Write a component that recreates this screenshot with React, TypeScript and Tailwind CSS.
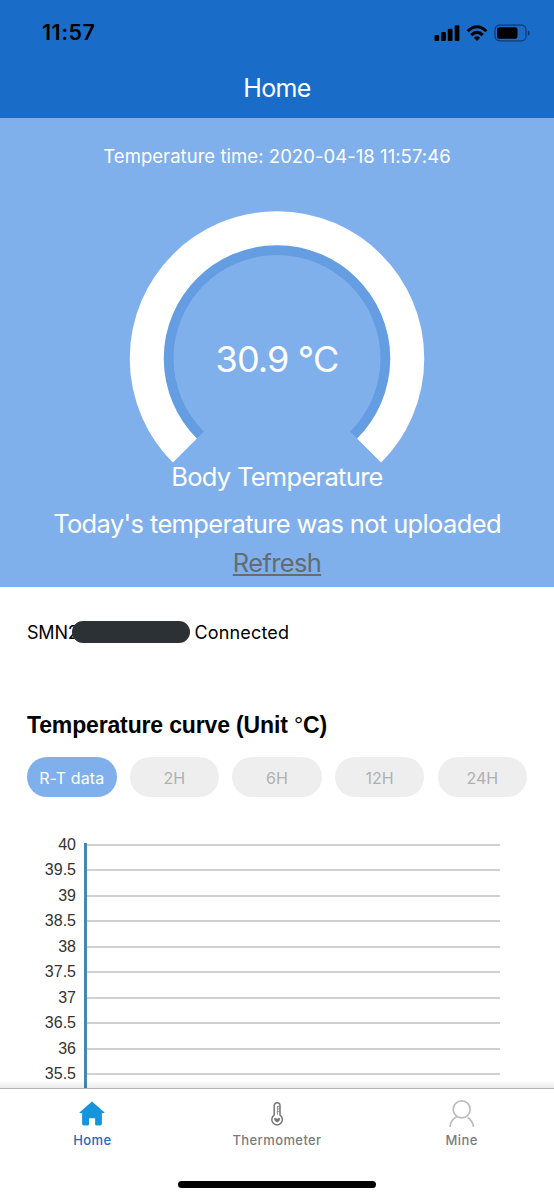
import React, { FC, ReactNode, useState } from 'react';

const periods = ['R-T data', '2H', '6H', '12H', '24H'];

const ticks = ['40', '39.5', '39', '38.5', '38', '37.5', '37', '36.5', '36', '35.5'];

const StatusBar: FC = () => (
  <div className="flex h-[66px] items-center justify-between pl-[42px] pr-[24px]">
    <span className="text-[21.5px] leading-none font-semibold tracking-[0.5px] text-black">11:57</span>
    <div className="flex items-center">
      <svg className="h-[16px] w-[26px]" viewBox="0 0 26 16">
        <rect x="0.5" y="10" width="4.7" height="6" rx="1" />
        <rect x="7.2" y="7" width="4.7" height="9" rx="1" />
        <rect x="13.8" y="3.7" width="4.7" height="12.3" rx="1" />
        <rect x="20.7" y="0.3" width="4.7" height="15.7" rx="1" />
      </svg>
      <svg className="ml-[6px] h-[16px] w-[22px]" viewBox="0 0 22 16">
        <path d="M0.6 5.2 Q11 -4.8 21.4 5.2 L19.3 7.3 Q11 -0.7 2.7 7.3 Z" />
        <path d="M4.2 9 Q11 2.6 17.8 9 L15.6 11.2 Q11 6.9 6.4 11.2 Z" />
        <path d="M7.8 12.7 Q11 9.8 14.2 12.7 L11 16 Z" />
      </svg>
      <svg className="ml-[6px] h-[18px] w-[36px]" viewBox="0 0 36 18">
        <rect x="1" y="1.2" width="31" height="15.6" rx="4.5" fill="none" stroke="#000" strokeOpacity="0.45" strokeWidth="1.2" />
        <rect x="3" y="3.2" width="20.5" height="11.6" rx="2.4" />
        <path d="M33.8 6.2 Q36 7.2 36 9 Q36 10.8 33.8 11.8 Z" fillOpacity="0.45" />
      </svg>
    </div>
  </div>
);

const Gauge: FC = () => (
  <div className="relative h-[255px] w-[300px]">
    <svg className="h-full w-full" viewBox="0 0 300 255" fill="none">
      <path d="M73.1 225.4 A108.75 108.75 0 1 1 226.9 225.4" stroke="#649de1" strokeWidth="10.5" />
      <path d="M57.9 240.6 A130.25 130.25 0 1 1 242.1 240.6" stroke="#fff" strokeWidth="34" />
    </svg>
    <div className="absolute inset-x-0 top-[127px] text-center text-[36px] leading-[44px] tracking-[-0.85px]">
      30.9 °C
    </div>
  </div>
);

const HomeIcon: FC = () => (
  <svg className="h-[26px] w-[26px]" viewBox="0 0 26 26" fill="#1794dc">
    <path d="M13 0.6 L25.3 11.2 Q25.8 12 24.8 12.1 L22.9 12.1 V22.8 Q22.9 24.6 21 24.6 H17.4 Q16.1 24.6 16.1 23.3 V17.2 H10 V23.3 Q10 24.6 8.7 24.6 H5 Q3.1 24.6 3.1 22.8 V12.1 H1.2 Q0.2 12 0.7 11.2 Z" />
  </svg>
);

const ThermometerIcon: FC = () => (
  <svg className="h-[26px] w-[26px]" viewBox="0 0 26 26" fill="none" stroke="#777" strokeWidth="1.5">
    <path d="M10.2 14.2 V4.7 A2.9 2.9 0 0 1 16 4.7 V14.2 A5.3 5.3 0 1 1 10.2 14.2 Z" />
    <path d="M13.4 5 V13.8 M13.4 5.6 H15.6 M13.4 8 H15.6 M13.4 10.4 H15.6" strokeWidth="0.8" />
    <path d="M9.9 17.2 Q11.6 16.9 13.1 17.7 Q14.7 16.9 16.3 17.2 Q16.2 20 13.1 21.4 Q10.1 20 9.9 17.2 Z" fill="#777" stroke="none" />
  </svg>
);

const MineIcon: FC = () => (
  <svg className="h-[28px] w-[26px]" viewBox="0 0 26 28" fill="none" stroke="#bdbdbd" strokeWidth="1.7">
    <circle cx="12.7" cy="9.4" r="8.5" />
    <path d="M0.9 26.8 Q1.7 19.6 7.9 16.5 M18.6 17.5 Q23.6 20.6 24.6 26.8" />
  </svg>
);

interface TabProps {
  label: string;
  icon: ReactNode;
  className: string;
}

const Tab: FC<TabProps> = ({ label, icon, className }) => (
  <button
    type="button"
    className={`flex flex-1 flex-col items-center text-[13px] leading-[16px] font-medium tracking-[0.4px] ${className}`}
  >
    <span className="mb-[4px] flex h-[28px] items-center">{icon}</span>
    {label}
  </button>
);

const App: FC = () => {
  const [period, setPeriod] = useState(periods[0]);

  return (
    <div className="flex h-[1200px] w-[554px] flex-col overflow-hidden bg-white font-['Inter',sans-serif] text-black">
      <header className="h-[118px] shrink-0 bg-[#1a6cc9]">
        <StatusBar />
        <h1 className="text-center text-[25px] leading-[44px] tracking-[-0.65px] text-white">Home</h1>
      </header>

      <section className="flex h-[468.5px] shrink-0 flex-col items-center bg-[#7fb0eb] text-white">
        <p className="mt-[26px] text-[18.5px] leading-[24px] tracking-[0.05px]">Temperature time: 2020-04-18 11:57:46</p>
        <div className="mt-[42px]">
          <Gauge />
        </div>
        <p className="-mt-[4px] text-[25.5px] leading-[32px] tracking-[-0.7px]">Body Temperature</p>
        <p className="mt-[15px] text-[25.5px] leading-[32px] tracking-[-0.64px]">
          Today&apos;s temperature was not uploaded
        </p>
        <button
          type="button"
          className="mt-[7px] text-[25.5px] leading-[32px] tracking-[-0.65px] text-[#666b70] underline decoration-[1.5px] underline-offset-[2px]"
        >
          Refresh
        </button>
      </section>

      <main className="flex min-h-0 flex-1 flex-col overflow-hidden px-[27px]">
        <div className="mt-[33.5px] flex h-[24px] items-center text-[18px]">
          <span className="w-[45px] tracking-[-0.2px]">SMN2</span>
          <span className="relative h-[22px] w-[118px] rounded-full bg-[#2b3135]" />
          <span className="ml-[4.5px] tracking-[0.15px]">Connected</span>
        </div>

        <h2 className="mt-[67px] font-['Liberation_Sans',sans-serif] text-[23px] leading-[28px] font-bold tracking-[-0.15px]">
          Temperature curve (Unit <span className="font-normal">°</span>C)
        </h2>

        <div className="mt-[18px] flex justify-between">
          {periods.map((item) => (
            <button
              key={item}
              type="button"
              onClick={() => setPeriod(item)}
              className={`h-[40px] w-[89.5px] rounded-full pt-[1px] text-[16px] ${
                item === period ? 'bg-[#7fb0eb] tracking-[0.1px] text-white' : 'bg-[#eee] text-[#b0b0b0]'
              }`}
            >
              {item}
            </button>
          ))}
        </div>

        <div className="mt-[46px] flex font-['Liberation_Sans',sans-serif] text-[16px] text-[#333]">
          <div className="-mt-[11px] w-[49px] text-right">
            {ticks.map((tick) => (
              <div key={tick} className="h-[25.47px] leading-[25.47px]">{tick}</div>
            ))}
          </div>
          <div className="ml-[8px] h-[260px] w-[416px] border-l-[3px] border-[#4387b7] pt-[1px]">
            {ticks.map((tick) => (
              <div key={tick} className="h-[25.47px]">
                <div className="h-[2px] bg-[#d0d0d0]" />
              </div>
            ))}
          </div>
        </div>
      </main>

      <nav className="relative flex h-[112px] shrink-0 flex-col border-t border-[#b5b5b5] bg-white">
        <div className="absolute inset-x-0 -top-[9px] h-[8px] bg-gradient-to-b from-black/0 to-black/8" />
        <div className="flex pt-[11px]">
          <Tab label="Home" icon={<HomeIcon />} className="text-[#1d69c4]" />
          <Tab label="Thermometer" icon={<ThermometerIcon />} className="text-[#7b7b7b]" />
          <Tab label="Mine" icon={<MineIcon />} className="text-[#7b7b7b]" />
        </div>
        <div className="mx-auto mt-[33px] h-[7px] w-[198px] rounded-full bg-black" />
      </nav>
    </div>
  );
};

export default App;
